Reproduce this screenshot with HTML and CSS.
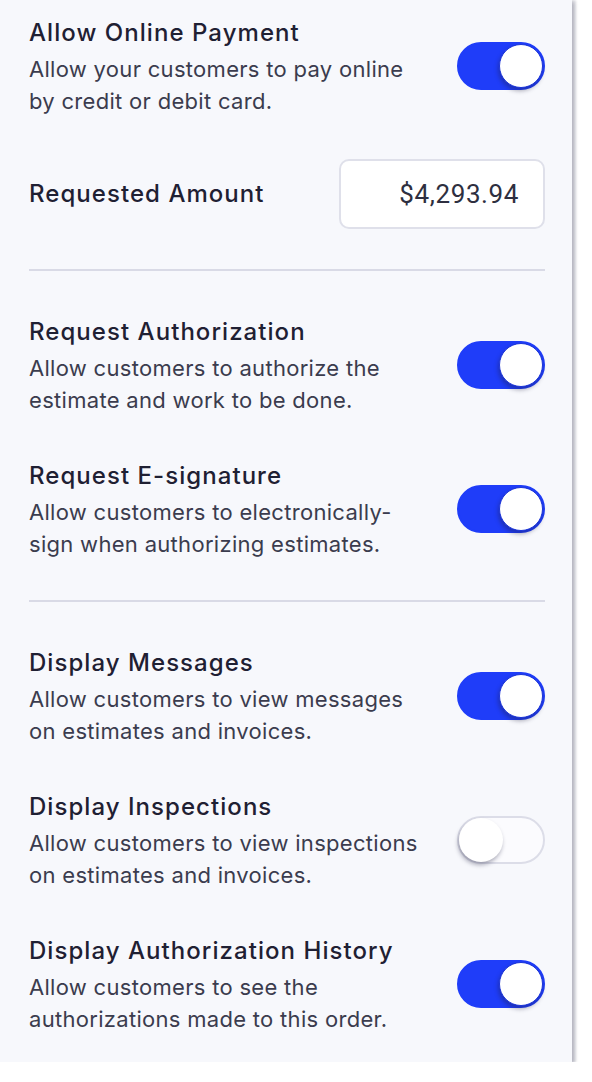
FILE: index.html
```html
<!DOCTYPE html>
<html lang="en">
<head>
    <meta charset="UTF-8">
    <meta name="viewport" content="width=device-width, initial-scale=1.0">
    <title>Customer Settings</title>
    <link rel="stylesheet" href="styles.css">
</head>
<body>
    <div class="panel">
        <div class="setting">
            <div class="setting-text">
                <div class="setting-title">Allow Online Payment</div>
                <div class="setting-desc">Allow your customers to pay online<br>by credit or debit card.</div>
            </div>
            <div class="toggle on"><div class="knob"></div></div>
        </div>

        <div class="setting amount">
            <div class="setting-title">Requested Amount</div>
            <div class="amount-box">$4,293.94</div>
        </div>

        <div class="divider"></div>

        <div class="setting">
            <div class="setting-text">
                <div class="setting-title">Request Authorization</div>
                <div class="setting-desc">Allow customers to authorize the<br>estimate and work to be done.</div>
            </div>
            <div class="toggle on"><div class="knob"></div></div>
        </div>

        <div class="setting">
            <div class="setting-text">
                <div class="setting-title">Request E-signature</div>
                <div class="setting-desc">Allow customers to electronically-<br>sign when authorizing estimates.</div>
            </div>
            <div class="toggle on"><div class="knob"></div></div>
        </div>

        <div class="divider"></div>

        <div class="setting">
            <div class="setting-text">
                <div class="setting-title">Display Messages</div>
                <div class="setting-desc">Allow customers to view messages<br>on estimates and invoices.</div>
            </div>
            <div class="toggle on"><div class="knob"></div></div>
        </div>

        <div class="setting">
            <div class="setting-text">
                <div class="setting-title">Display Inspections</div>
                <div class="setting-desc">Allow customers to view inspections<br>on estimates and invoices.</div>
            </div>
            <div class="toggle"><div class="knob"></div></div>
        </div>

        <div class="setting">
            <div class="setting-text">
                <div class="setting-title">Display Authorization History</div>
                <div class="setting-desc">Allow customers to see the<br>authorizations made to this order.</div>
            </div>
            <div class="toggle on"><div class="knob"></div></div>
        </div>
    </div>
</body>
</html>
```

FILE: styles.css
```css
body {
    margin: 0;
    background: #ffffff;
    font-family: Inter, Roboto, "Liberation Sans", sans-serif;
}
.panel {
    width: 572px;
    box-sizing: border-box;
    background: #f7f8fc;
    padding: 15px 27px 27px 29px;
    box-shadow: 2px 2px 4px rgba(40, 42, 70, 0.3), 4px 0 2px rgba(40, 42, 70, 0.12);
    display: flex;
    flex-direction: column;
    gap: 42px;
}
.setting {
    display: flex;
    align-items: center;
    justify-content: space-between;
}
.setting-title {
    font-size: 24px;
    font-weight: 500;
    line-height: 36px;
    letter-spacing: 1.05px;
    color: #1f2033;
}
.setting-desc {
    padding-top: 2px;
    font-size: 22px;
    line-height: 32px;
    letter-spacing: 0.3px;
    color: #3b3c4e;
}
.amount-box {
    width: 206px;
    height: 70px;
    box-sizing: border-box;
    background: #ffffff;
    border: 2px solid #dfe0ea;
    border-radius: 10px;
    padding-right: 24px;
    display: flex;
    align-items: center;
    justify-content: flex-end;
    font-family: Roboto, sans-serif;
    font-size: 26px;
    letter-spacing: 0.6px;
    color: #2e2f40;
}
.divider {
    height: 2px;
    background: #d9dae6;
    margin: -2px 0 1px;
}
.toggle {
    width: 88px;
    height: 48px;
    box-sizing: border-box;
    border-radius: 24px;
    background: #fbfbfe;
    border: 2px solid #dcdde8;
    position: relative;
    flex-shrink: 0;
}
.toggle.on {
    background: #1f3df9;
    border-color: #1f3df9;
}
.knob {
    position: absolute;
    top: 0;
    left: 0;
    width: 44px;
    height: 44px;
    border-radius: 50%;
    background: #ffffff;
    box-shadow: -1px 3px 4px rgba(30, 30, 60, 0.35);
}
.toggle.on .knob {
    left: 40px;
    box-sizing: border-box;
    border: 1px solid #1a33d8;
}
```
